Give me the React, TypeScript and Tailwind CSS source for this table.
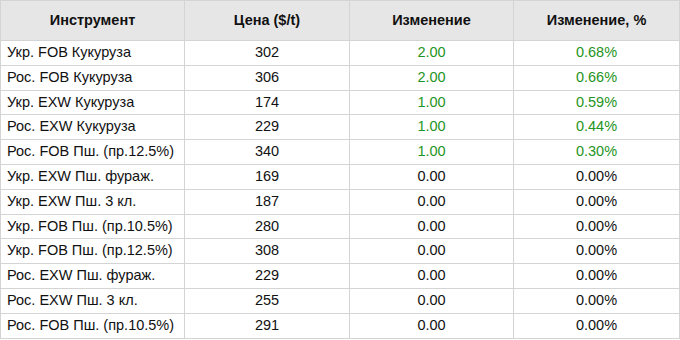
import React from 'react';

type Row = { name: string; price: string; change: string; pct: string; up: boolean };

const ROWS: Row[] = [
  { name: 'Укр. FOB Кукуруза', price: '302', change: '2.00', pct: '0.68%', up: true },
  { name: 'Рос. FOB Кукуруза', price: '306', change: '2.00', pct: '0.66%', up: true },
  { name: 'Укр. EXW Кукуруза', price: '174', change: '1.00', pct: '0.59%', up: true },
  { name: 'Рос. EXW Кукуруза', price: '229', change: '1.00', pct: '0.44%', up: true },
  { name: 'Рос. FOB Пш. (пр.12.5%)', price: '340', change: '1.00', pct: '0.30%', up: true },
  { name: 'Укр. EXW Пш. фураж.', price: '169', change: '0.00', pct: '0.00%', up: false },
  { name: 'Укр. EXW Пш. 3 кл.', price: '187', change: '0.00', pct: '0.00%', up: false },
  { name: 'Укр. FOB Пш. (пр.10.5%)', price: '280', change: '0.00', pct: '0.00%', up: false },
  { name: 'Укр. FOB Пш. (пр.12.5%)', price: '308', change: '0.00', pct: '0.00%', up: false },
  { name: 'Рос. EXW Пш. фураж.', price: '229', change: '0.00', pct: '0.00%', up: false },
  { name: 'Рос. EXW Пш. 3 кл.', price: '255', change: '0.00', pct: '0.00%', up: false },
  { name: 'Рос. FOB Пш. (пр.10.5%)', price: '291', change: '0.00', pct: '0.00%', up: false },
];

export default function App() {
  return (
    <div className="w-[680px] h-[340px] bg-white font-['Liberation_Sans',Arial,sans-serif] text-[14.5px] text-[#111]">
      <table className="w-[679px] table-fixed border-collapse">
        <colgroup>
          <col className="w-[184px]" />
          <col className="w-[165px]" />
          <col className="w-[164px]" />
          <col className="w-[166px]" />
        </colgroup>
        <thead>
          <tr className="h-[40px] bg-[#e6e6e6]">
            <th className="border border-[#d4d4d4] font-bold text-center p-0">Инструмент</th>
            <th className="border border-[#d4d4d4] font-bold text-center p-0">Цена ($/t)</th>
            <th className="border border-[#d4d4d4] font-bold text-center p-0">Изменение</th>
            <th className="border border-[#d4d4d4] font-bold text-center p-0">Изменение, %</th>
          </tr>
        </thead>
        <tbody>
          {ROWS.map((r, i) => (
            <tr key={i} className="h-[24.8px]">
              <td className="border border-[#d4d4d4] pl-[6px] p-0 whitespace-nowrap">{r.name}</td>
              <td className="border border-[#d4d4d4] text-center p-0">{r.price}</td>
              <td className={`border border-[#d4d4d4] text-center p-0 ${r.up ? 'text-[#1f9424]' : ''}`}>{r.change}</td>
              <td className={`border border-[#d4d4d4] text-center p-0 ${r.up ? 'text-[#1f9424]' : ''}`}>{r.pct}</td>
            </tr>
          ))}
        </tbody>
      </table>
    </div>
  );
}
